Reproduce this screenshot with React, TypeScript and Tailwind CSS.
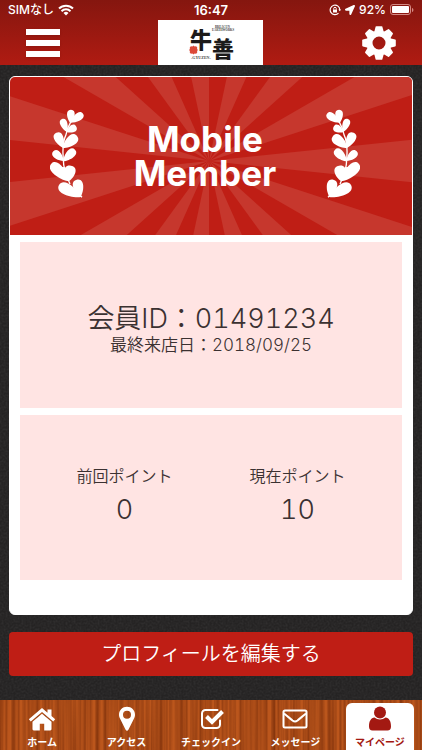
// src/App.tsx
import React from 'react';
import { FaLocationArrow } from 'react-icons/fa';

interface Tab {
  id: string;
  label: string;
  icon: React.ReactNode;
  active?: boolean;
}

interface Point {
  label: string;
  value: number;
}

const points: Point[] = [
  { label: '前回ポイント', value: 0 },
  { label: '現在ポイント', value: 10 },
];

const tabs: Tab[] = [
  {
    id: 'home',
    label: 'ホーム',
    icon: (
      <svg width="28" height="24" viewBox="0 0 28 24" fill="currentColor" aria-hidden="true">
        <path d="M14 1 .8 12.200l2 2.200L14 4.900l11.200 9.500 2-2.200-3.700-3.100V2.500h-4v3.200z" />
        <path d="M14 6.800 4.500 14.800V22c0 .8.5 1.400 1.300 1.400h6v-6.600h4.400v6.600h6c.8 0 1.300-.6 1.300-1.400v-7.200z" />
      </svg>
    ),
  },
  {
    id: 'access',
    label: 'アクセス',
    icon: (
      <svg width="18" height="25" viewBox="0 0 18 25" fill="currentColor" aria-hidden="true">
        <path
          fillRule="evenodd"
          d="M9 .8c-4.500 0-8 3.500-8 7.900 0 1.600.4 2.600 1.100 4l5.500 11.100c.6 1.200 2.200 1.200 2.800 0l5.500-11.100c.7-1.400 1.100-2.400 1.100-4C17 4.300 13.500.8 9 .8zm0 3.900a4 4 0 1 1 0 8 4 4 0 0 1 0-8z"
        />
      </svg>
    ),
  },
  {
    id: 'checkin',
    label: 'チェックイン',
    icon: (
      <svg width="28" height="22" viewBox="-3 0 28 22" fill="none" stroke="currentColor" aria-hidden="true">
        <path
          d="M17.500 2H5.500A3.500 3.500 0 0 0 2 5.500v11A3.500 3.500 0 0 0 5.500 20h11a3.500 3.500 0 0 0 3.500-3.500V12.500"
          strokeWidth="2"
          strokeLinecap="round"
        />
        <path d="m6.500 8.500 5.500 5.500L22.500 3.500" strokeWidth="4" />
      </svg>
    ),
  },
  {
    id: 'message',
    label: 'メッセージ',
    icon: (
      <svg width="26" height="20" viewBox="0 0 26 20" fill="none" stroke="currentColor" strokeWidth="2" aria-hidden="true">
        <rect x="1.500" y="1.500" width="23" height="17" rx="1.500" />
        <path d="M2 4.500c3 2.600 6 4.800 8.500 7 1.600 1.300 3.400 1.300 5 0 2.500-2.200 5.500-4.400 8.500-7" />
      </svg>
    ),
  },
  {
    id: 'mypage',
    label: 'マイページ',
    active: true,
    icon: (
      <svg width="24" height="25" viewBox="0 0 24 25" fill="currentColor" aria-hidden="true">
        <circle cx="12" cy="6.500" r="6" />
        <path d="M6.500 11.500C3 12 1 15 1 20.500 1 23 2.200 24.500 4.500 24.500h15c2.300 0 3.500-1.500 3.500-4 0-5.500-2-8.500-5.500-9-3 2.500-8 2.500-11 0z" />
      </svg>
    ),
  },
];

// One leaf, drawn from its base to its tip
const Leaf: React.FC<{ x: number; y: number; tx: number; ty: number; w: number }> = ({ x, y, tx, ty, w }) => {
  const length = Math.hypot(tx - x, ty - y);
  const angle = (Math.atan2(ty - y, tx - x) * 180) / Math.PI;
  return (
    <path
      transform={`translate(${x} ${y}) rotate(${angle})`}
      d={`M0 0C${length * 0.35} ${-w * 0.7} ${length} ${-w} ${length} 0C${length} ${w} ${length * 0.35} ${w * 0.7} 0 0z`}
    />
  );
};

const Laurel: React.FC<{ className?: string }> = ({ className }) => (
  <svg className={className} width="34" height="90" viewBox="150 115 102 270" fill="white" aria-hidden="true">
    <path
      d="M213 152C203 170 200 180 198 192C186 215 188 245 190 268C190 290 200 318 210 340M228 362L246 380"
      fill="none"
      stroke="white"
      strokeWidth="4"
    />
    <Leaf x={212} y={158} tx={213} ty={117} w={18} />
    <Leaf x={210} y={156} tx={249} ty={129} w={18} />
    <Leaf x={201} y={184} tx={186} ty={145} w={17} />
    <Leaf x={199} y={184} tx={229} ty={168} w={17} />
    <Leaf x={190} y={232} tx={169} ty={186} w={22} />
    <Leaf x={188} y={232} tx={231} ty={196} w={24} />
    <Leaf x={191} y={271} tx={160} ty={242} w={19} />
    <Leaf x={189} y={272} tx={225} ty={237} w={20} />
    <Leaf x={207} y={332} tx={154} ty={279} w={26} />
    <Leaf x={206} y={332} tx={212} ty={285} w={26} />
    <Leaf x={196} y={328} tx={184} ty={290} w={20} />
    <Leaf x={243} y={379} tx={177} ty={343} w={27} />
    <Leaf x={242} y={379} tx={230} ty={327} w={24} />
  </svg>
);

// Sunburst behind the title: 15 light rays, 24 degrees apart
const Rays: React.FC = () => (
  <svg
    className="absolute inset-0 h-full w-full"
    viewBox="0 0 402 158"
    preserveAspectRatio="xMidYMid slice"
    fill="#c6372d"
    aria-hidden="true"
  >
    {Array.from({ length: 15 }, (_, i) => {
      const from = ((i * 24 - 6) * Math.PI) / 180;
      const to = ((i * 24 + 6) * Math.PI) / 180;
      return (
        <path
          key={i}
          d={`M199 84L${199 + 400 * Math.cos(from)} ${84 - 400 * Math.sin(from)}L${199 + 400 * Math.cos(to)} ${84 - 400 * Math.sin(to)}z`}
        />
      );
    })}
  </svg>
);

const Texture: React.FC<{ id: string; frequency: string; matrix: string }> = ({ id, frequency, matrix }) => (
  <svg className="absolute inset-0 h-full w-full" aria-hidden="true">
    <filter id={id} x="0" y="0" width="100%" height="100%" colorInterpolationFilters="sRGB">
      <feTurbulence type="fractalNoise" baseFrequency={frequency} numOctaves={3} seed={4} />
      <feColorMatrix values={matrix} />
    </filter>
    <rect width="100%" height="100%" filter={`url(#${id})`} />
  </svg>
);

const Logo: React.FC = () => (
  <svg className="h-full w-full overflow-visible" viewBox="0 0 105 45" role="img" aria-label="牛善">
    <g fontFamily="'Noto Sans CJK JP', sans-serif" fontWeight="900" fill="#1c1a1a">
      <text x="32" y="28" fontSize="22">牛</text>
      <text x="54" y="37" fontSize="22">善</text>
    </g>
    <g fill="#dc4a38">
      <path d="m35.500 25.500 4.500 4.500-4.500 4.500L31 30z" />
      <circle cx="33.500" cy="28" r="1.800" />
      <circle cx="37.500" cy="28" r="1.800" />
      <circle cx="33.500" cy="32" r="1.800" />
      <circle cx="37.500" cy="32" r="1.800" />
    </g>
    <g fontFamily="'Liberation Serif', serif" fontWeight="bold" fill="#444">
      <text x="57" y="8" fontSize="3">BREACUN</text>
      <text x="54" y="11" fontSize="3">EARTHWORKS</text>
      <text x="33" y="39" fontSize="4">-GYUZEN-</text>
    </g>
  </svg>
);

const StatusBar: React.FC = () => (
  <div className="grid h-5 grid-cols-3 items-center px-2 text-[12px] leading-5 font-medium text-white">
    <div className="flex items-center gap-1">
      <span>SIMなし</span>
      <svg width="16" height="12" viewBox="0 0 16 12" fill="none" stroke="white" strokeWidth="2" aria-hidden="true">
        <path d="M1 4.500a10 10 0 0 1 14 0M3.500 7.200a6.400 6.400 0 0 1 9 0" />
        <path d="M8 11.500 5.500 9a3.600 3.600 0 0 1 5 0z" fill="white" stroke="none" />
      </svg>
    </div>
    <span className="text-center text-[13px] font-semibold">16:47</span>
    <div className="flex items-center justify-end gap-1">
      <svg width="12" height="12" viewBox="0 0 12 12" fill="none" stroke="white" aria-hidden="true">
        <path d="M9.500 9.200A4.800 4.800 0 1 1 10.800 6" strokeWidth="1.200" />
        <path d="m9.300 5.500 1.500 1.800L12 5.500z" fill="white" stroke="none" />
        <rect x="4" y="5.500" width="4" height="3" fill="white" stroke="none" />
        <path d="M4.700 5.500V4.600a1.300 1.300 0 0 1 2.600 0v.9" />
      </svg>
      <FaLocationArrow className="size-[10px]" />
      <span>92%</span>
      <svg width="24" height="12" viewBox="0 0 24 12" aria-hidden="true">
        <rect x="0.500" y="0.500" width="20" height="10" rx="2.500" fill="none" stroke="#d58a84" />
        <rect x="2" y="2" width="17" height="7" rx="1" fill="white" />
        <path d="M22 4v4c1-.4 1.400-1 1.400-2S23 4.400 22 4z" fill="#d58a84" />
      </svg>
    </div>
  </div>
);

const Header: React.FC = () => (
  <header className="bg-gradient-to-b from-[#85160f] to-[#b01b12]">
    <StatusBar />
    <div className="grid h-[45px] grid-cols-3 items-center">
      <button type="button" aria-label="メニュー" className="ml-[26px] flex w-[34px] flex-col gap-[5px]">
        <span className="h-[6px] w-full bg-white shadow-sm" />
        <span className="h-[6px] w-full bg-white shadow-sm" />
        <span className="h-[6px] w-full bg-white shadow-sm" />
      </button>
      <a href="#" className="block h-[45px] w-[105px] justify-self-center bg-white">
        <Logo />
      </a>
      <button type="button" aria-label="設定" className="mr-[26px] justify-self-end">
        <svg width="34" height="34" viewBox="-17 -17 34 34" fill="white" aria-hidden="true">
          {[0, 45, 90, 135, 180, 225, 270, 315].map((angle) => (
            <path key={angle} transform={`rotate(${angle})`} d="M-5-10-3.400-16.200q.2-.6.8-.6h5.200q.6 0 .8.6L5-10z" />
          ))}
          <circle r="9.500" fill="none" stroke="white" strokeWidth="6" />
        </svg>
      </button>
    </div>
  </header>
);

const MemberCard: React.FC = () => (
  <section className="overflow-hidden rounded-md border border-white bg-white pb-[34px] text-[#3b3131]">
    <div className="relative flex h-[158px] items-center justify-between bg-[#bf1e15] pr-[52px] pb-1 pl-10">
      <Rays />
      <Laurel className="relative" />
      <h1 className="relative pt-1 text-center text-[35px] leading-[34px] font-bold text-white">
        Mobile
        <br />
        Member
      </h1>
      <Laurel className="relative -scale-x-100" />
    </div>
    <div className="mt-[7px] flex flex-col gap-[7px] px-[10px] font-[350] tabular-nums">
      <div className="flex h-[166px] flex-col items-center justify-center bg-[#ffe4e3] pt-2">
        <p className="text-[27px] leading-8">会員ID：01491234</p>
        <p className="text-[17px] leading-5">最終来店日：2018/09/25</p>
      </div>
      <dl className="grid h-[165px] grid-cols-2 items-center bg-[#ffe4e3] px-[18px] pb-1 text-center">
        {points.map((point) => (
          <div key={point.label}>
            <dt className="text-[16px] leading-7">{point.label}</dt>
            <dd className="text-[27px] leading-10">{point.value}</dd>
          </div>
        ))}
      </dl>
    </div>
  </section>
);

const TabBar: React.FC = () => (
  <nav className="relative grid h-[50px] grid-cols-5 bg-[#bb561c]">
    <Texture id="wood" frequency="0.25 0.002" matrix="0 0 0 0 0.35  0 0 0 0 0.1  0 0 0 0 0  1.2 0 0 0 -0.4" />
    {tabs.map((tab) => (
      <a
        key={tab.id}
        href={`#${tab.id}`}
        className={
          tab.active
            ? 'relative mx-2 mt-[3px] flex flex-col items-center rounded-t-md bg-white text-[#a31912]'
            : 'relative mx-2 mt-[3px] flex flex-col items-center text-white'
        }
      >
        <span className="flex h-[31px] items-center">{tab.icon}</span>
        <span className="text-[10px] leading-4 font-bold whitespace-nowrap">{tab.label}</span>
      </a>
    ))}
  </nav>
);

const App: React.FC = () => {
  return (
    <div className="flex min-h-screen flex-col bg-[#252323] font-['Inter','Noto_Sans_CJK_JP',sans-serif]" lang="ja">
      <Header />
      <main className="relative flex-1 px-[9px] pt-[11px] pb-6">
        <Texture id="slate" frequency="0.5" matrix="0 0 0 0 0.6  0 0 0 0 0.6  0 0 0 0 0.6  0.2 0 0 0 -0.07" />
        <div className="relative flex flex-col gap-[17px]">
          <MemberCard />
          <button type="button" className="h-11 rounded-sm bg-[#bf1e15] text-[20px] font-[350] text-white">
            プロフィールを編集する
          </button>
        </div>
      </main>
      <TabBar />
    </div>
  );
};

export default App;
